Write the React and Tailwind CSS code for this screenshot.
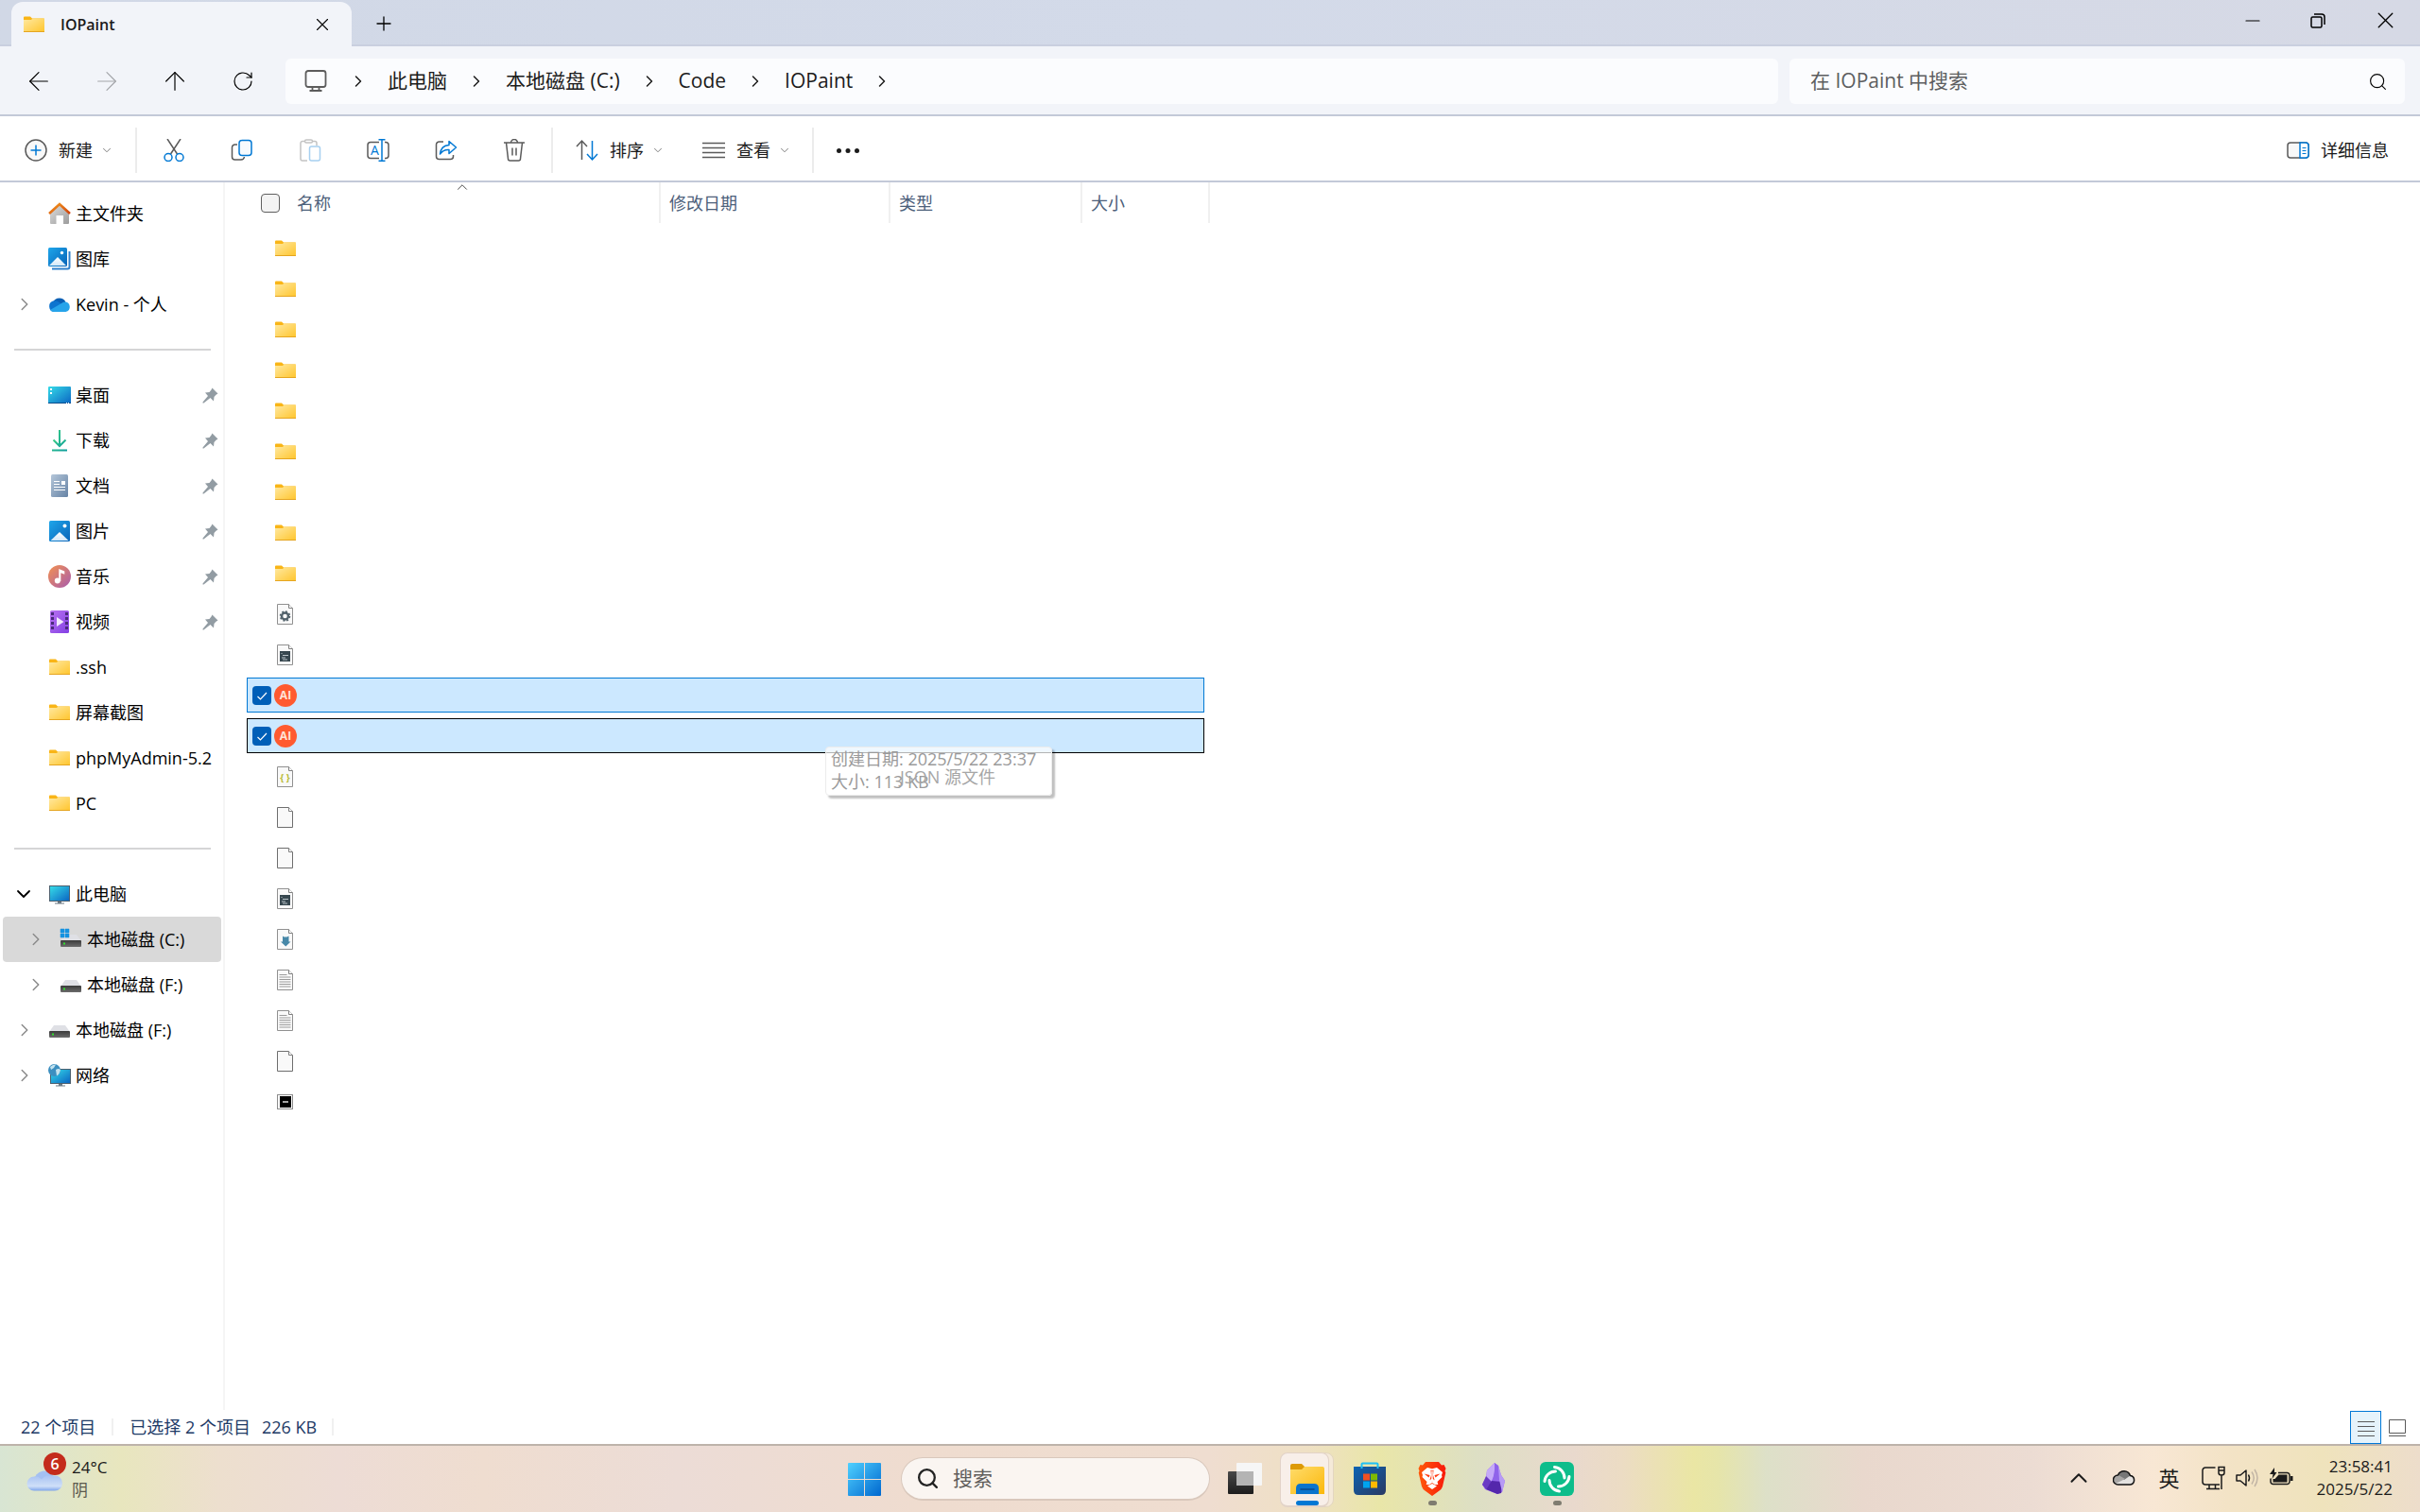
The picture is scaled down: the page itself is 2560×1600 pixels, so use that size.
import { useState } from "react";
import {
  ArrowLeft,
  ArrowRight,
  ArrowUp,
  ChevronDown,
  ChevronRight,
  ChevronUp,
  Minus,
  Plus,
  RotateCw,
  Search,
  X,
} from "lucide-react";

const Gradients = () => (
  <svg width="0" height="0" className="absolute" aria-hidden="true">
    <defs>
      <linearGradient id="folder" x1="0" y1="0" x2="1" y2="1">
        <stop offset="0" stopColor="#ffe9a2" />
        <stop offset="1" stopColor="#ffc52c" />
      </linearGradient>
      <linearGradient id="cyan" x1="0" y1="0" x2="1" y2="1">
        <stop offset="0" stopColor="#36dbe8" />
        <stop offset="1" stopColor="#0b66c3" />
      </linearGradient>
      <linearGradient id="blue" x1="0" y1="0" x2="1" y2="1">
        <stop offset="0" stopColor="#1fa6ea" />
        <stop offset="1" stopColor="#0763b8" />
      </linearGradient>
      <linearGradient id="winlogo" x1="0" y1="0" x2="1" y2="1">
        <stop offset="0" stopColor="#4fd0ff" />
        <stop offset="1" stopColor="#0067cf" />
      </linearGradient>
      <linearGradient id="snow" x1="0" y1="0" x2="0" y2="1">
        <stop offset="0" stopColor="#ffffff" />
        <stop offset="1" stopColor="#d3e8f8" />
      </linearGradient>
      <linearGradient id="green" x1="0" y1="0" x2="1" y2="1">
        <stop offset="0" stopColor="#3ccf86" />
        <stop offset="1" stopColor="#0c9c9c" />
      </linearGradient>
      <linearGradient id="doc" x1="0" y1="0" x2="1" y2="1">
        <stop offset="0" stopColor="#b4c6d9" />
        <stop offset="1" stopColor="#6683a5" />
      </linearGradient>
      <linearGradient id="music" x1="0" y1="0" x2="1" y2="1">
        <stop offset="0" stopColor="#f3914f" />
        <stop offset="1" stopColor="#a85cae" />
      </linearGradient>
      <linearGradient id="video" x1="0" y1="0" x2="1" y2="1">
        <stop offset="0" stopColor="#b872f0" />
        <stop offset="1" stopColor="#8340e4" />
      </linearGradient>
      <linearGradient id="roof" x1="0" y1="0" x2="1" y2="1">
        <stop offset="0" stopColor="#f49a1f" />
        <stop offset="1" stopColor="#d0400a" />
      </linearGradient>
      <linearGradient id="wall" x1="0" y1="0" x2="1" y2="1">
        <stop offset="0" stopColor="#dcdcdc" />
        <stop offset="1" stopColor="#9c9c9c" />
      </linearGradient>
      <linearGradient id="drive" x1="0" y1="0" x2="0" y2="1">
        <stop offset="0" stopColor="#3a3a3a" />
        <stop offset="1" stopColor="#6c6c6c" />
      </linearGradient>
      <linearGradient id="sky" x1="0" y1="0" x2="0" y2="1">
        <stop offset="0" stopColor="#a9c3f2" />
        <stop offset="0.7" stopColor="#cfdff8" />
        <stop offset="1" stopColor="#7fa5ea" />
      </linearGradient>
      <linearGradient id="yellow" x1="0" y1="0" x2="1" y2="1">
        <stop offset="0" stopColor="#ffdc6b" />
        <stop offset="1" stopColor="#fbb80c" />
      </linearGradient>
      <linearGradient id="store" x1="0" y1="0" x2="1" y2="1">
        <stop offset="0" stopColor="#0b63b3" />
        <stop offset="1" stopColor="#2b3a63" />
      </linearGradient>
      <linearGradient id="brave" x1="0" y1="0" x2="1" y2="0">
        <stop offset="0" stopColor="#ff5a0a" />
        <stop offset="1" stopColor="#f8190a" />
      </linearGradient>
      <linearGradient id="dark" x1="0" y1="0" x2="0" y2="1">
        <stop offset="0" stopColor="#484848" />
        <stop offset="1" stopColor="#1c1c1c" />
      </linearGradient>
    </defs>
  </svg>
);

const Icon = ({ size = 24, children }) => (
  <svg
    width={size}
    height={size}
    viewBox="0 0 24 24"
    fill="none"
    className="shrink-0"
    aria-hidden="true"
  >
    {children}
  </svg>
);

const FolderIcon = () => (
  <Icon>
    <path d="M1 4.500a1 1 0 0 1 1-1h6l2 2h12.500v2H1z" fill="#f9b517" />
    <path d="M1 7h8l1.500-1.500H23V20H1z" fill="url(#folder)" />
    <path d="M1 19.500h22" stroke="#e5a520" />
  </Icon>
);

const HomeIcon = () => (
  <Icon>
    <path d="M2 11 12 3l10 8v11q0 1-1 1h-5v-9H8.500v9H3q-1 0-1-1z" fill="url(#wall)" />
    <path d="m1 12 11-10 11 10" stroke="url(#roof)" strokeWidth="2.600" />
  </Icon>
);

const GalleryIcon = () => (
  <Icon>
    <path d="M22.500 4v16.500a2 2 0 0 1-2 2H4" stroke="#2f80cc" strokeWidth="2" />
    <rect width="20" height="20" rx="1.500" fill="url(#blue)" />
    <path d="M1 19 10 10l9 9z" fill="url(#snow)" />
    <circle cx="14.500" cy="5.500" r="1.700" fill="#fff" />
  </Icon>
);

const CloudIcon = () => (
  <Icon>
    <path d="M5 10a7.500 7.500 0 0 1 13.500-.5L11 15z" fill="#0a5fb4" />
    <path d="M6 20a6 6 0 0 1-1-11.500q3-1 6 1L20 16l-8 4z" fill="#0d74cf" />
    <path d="M17.500 9.500a5.300 5.300 0 0 1 1 10.500H6q-2.500 0-4-2l12-7q1.500-1.300 3.500-1.500z" fill="#27a4ea" />
  </Icon>
);

const DesktopIcon = () => (
  <Icon>
    <rect y="3" width="24" height="18" rx="1" fill="url(#cyan)" />
    <path d="M0 20.500h24" stroke="#0d4d8b" />
    <path d="M2 5h2v2H2zM2 9h2v2H2zM19 20h1v1h-1zM21 20h1v1h-1z" fill="#fff" />
  </Icon>
);

const DownloadIcon = () => (
  <Icon>
    <path d="M5.500 11.500 12 18l6.500-6.500" stroke="url(#green)" strokeWidth="2" />
    <path d="M11 1h2v17h-2zM4 21.500h16v2H4z" fill="url(#green)" />
  </Icon>
);

const DocumentIcon = () => (
  <Icon>
    <rect x="3" width="18" height="24" rx="1.500" fill="url(#doc)" />
    <path d="M6 7.500h6M6 10.500h6M6 13.500h12M6 16.500h12" stroke="#fff" />
    <path d="M14 7h4v4h-4z" fill="#fff" />
  </Icon>
);

const PictureIcon = () => (
  <Icon>
    <rect x="1" y="1" width="22" height="22" rx="1.500" fill="url(#blue)" />
    <path d="m2.500 22 9.500-9 9.500 9z" fill="url(#snow)" />
    <circle cx="17.500" cy="6.500" r="2" fill="#fff" />
  </Icon>
);

const MusicIcon = () => (
  <Icon>
    <circle cx="12" cy="12" r="12" fill="url(#music)" />
    <circle cx="9.800" cy="16.500" r="3" fill="#fff" />
    <path d="M11.300 17V4l6 2.500v3.300l-4-1.600V17z" fill="#fff" />
  </Icon>
);

const VideoIcon = () => (
  <Icon>
    <rect x="2" width="20" height="24" rx="1.500" fill="url(#video)" />
    <path d="M4.500 2v20M19.500 2v20" stroke="#4b2a7c" strokeWidth="3" strokeDasharray="3 2" />
    <path d="m9 7 7.500 5L9 17z" fill="#f3eafd" />
  </Icon>
);

const PcIcon = () => (
  <Icon>
    <rect x="1" y="3" width="22" height="17" fill="#4c5f6e" />
    <rect x="2" y="4" width="20" height="15" fill="url(#cyan)" />
    <path d="M10 20h4v1.500h3v1H7v-1h3z" fill="#6d7a84" />
  </Icon>
);

const NetworkIcon = () => (
  <Icon>
    <rect x="2" y="5" width="22" height="16" fill="#4c5f6e" />
    <rect x="3" y="6" width="20" height="14" fill="url(#cyan)" />
    <path d="M11 21h4v1.500h3v1H8v-1h3z" fill="#6d7a84" />
    <circle cx="6.500" cy="6.500" r="6.500" fill="#3c8fc0" />
    <path d="M2 3q3-3 6-2.500L6 4 3 6zM8 6q3-2 5 0-1 5-4 6.500z" fill="#c4e3ef" />
  </Icon>
);

const DriveIcon = ({ system }) => (
  <Icon>
    <path d="M6 7h12l5 7H1z" fill="#dfe0e5" />
    <rect x="1" y="13" width="22" height="7" rx="1" fill="url(#drive)" />
    <path d="M4 15.500h2v2H4z" fill="#2fe02c" />
    {system && (
      <path
        d="M1 1h4v4H1zM6 1h4v4H6zM1 6h4v4H1zM6 6h4v4H6z"
        fill="#1492e0"
        stroke="#1492e0"
        strokeWidth="0.500"
      />
    )}
  </Icon>
);

const PinIcon = () => (
  <svg width="17" height="17" viewBox="0 0 17 17" className="shrink-0" aria-hidden="true">
    <path
      d="m10.500.5 6 6-2 1.200-2 2.300-.5 4.500L8.500 11l-7 5.500H.5v-1L6 9 3 5.500 7.500 5l2-2.500z"
      fill="#929ca3"
    />
  </svg>
);

const FileIcon = ({ kind }) => (
  <Icon>
    <path
      d="M3.500 1.500h12l4 4v17h-16z"
      fill="#f9f9f9"
      stroke={kind === "blank" ? "#6e6e6e" : "#909090"}
    />
    <path d="M15.500 1.500v4h4" fill="#fff" stroke="#808080" />
    {kind === "gear" && (
      <>
        <circle cx="11.500" cy="14" r="3.500" stroke="#53636c" strokeWidth="2.400" />
        <circle cx="11.500" cy="14" r="5" stroke="#53636c" strokeWidth="1.600" strokeDasharray="1.960 1.960" />
      </>
    )}
    {kind === "script" && (
      <>
        <path d="M6 8h11v11H6z" fill="#37474f" />
        <path d="M7.500 10.500h1M9 12.500h6M8 15h4M9 17h5" stroke="#b9c3c8" />
      </>
    )}
    {kind === "json" && (
      <text x="11.500" y="17" textAnchor="middle" fontSize="10" fontWeight="700" fill="#b8bb35">
        {"{ }"}
      </text>
    )}
    {kind === "down" && (
      <path d="M9 8.500 10.500 9.500h3L15.500 8.500v6H17.500L12.300 19.500 7 14.500h2z" fill="#4788a8" />
    )}
    {kind === "text" && (
      <path
        d="M5.500 6.500h8M5.500 9h12M5.500 11.500h12M5.500 14h12M5.500 16.500h12M5.500 19h12"
        stroke="#9b9b9b"
      />
    )}
  </Icon>
);

const ChipIcon = () => (
  <Icon>
    <rect x="3.500" y="4.500" width="16" height="15" stroke="#8b8b8b" />
    <rect x="6" y="6" width="12" height="12" fill="#000" />
    <path d="M9 12h6" stroke="#ddd" strokeWidth="1.500" />
  </Icon>
);

const AiIcon = () => (
  <span className="flex size-6 items-center justify-center rounded-full bg-[#ff5a30] text-xs leading-none font-bold text-[#ffe4d8]">
    AI
  </span>
);

const quickLinks = [
  { name: "主文件夹", icon: <HomeIcon /> },
  { name: "图库", icon: <GalleryIcon /> },
  { name: "Kevin - 个人", icon: <CloudIcon />, arrow: true },
];

const pinned = [
  { name: "桌面", icon: <DesktopIcon />, pin: true },
  { name: "下载", icon: <DownloadIcon />, pin: true },
  { name: "文档", icon: <DocumentIcon />, pin: true },
  { name: "图片", icon: <PictureIcon />, pin: true },
  { name: "音乐", icon: <MusicIcon />, pin: true },
  { name: "视频", icon: <VideoIcon />, pin: true },
  { name: ".ssh", icon: <FolderIcon /> },
  { name: "屏幕截图", icon: <FolderIcon /> },
  { name: "phpMyAdmin-5.2", icon: <FolderIcon /> },
  { name: "PC", icon: <FolderIcon /> },
];

const devices = [
  { name: "此电脑", icon: <PcIcon />, open: true },
  { name: "本地磁盘 (C:)", icon: <DriveIcon system />, arrow: true, nested: true, active: true },
  { name: "本地磁盘 (F:)", icon: <DriveIcon />, arrow: true, nested: true },
  { name: "本地磁盘 (F:)", icon: <DriveIcon />, arrow: true },
  { name: "网络", icon: <NetworkIcon />, arrow: true },
];

const files = [
  ...Array(9).fill("folder"),
  "gear",
  "script",
  "ai",
  "ai",
  "json",
  "blank",
  "blank",
  "script",
  "down",
  "text",
  "text",
  "blank",
  "chip",
];

const crumbs = ["此电脑", "本地磁盘 (C:)", "Code", "IOPaint"];

const TitleBar = () => (
  <header className="flex h-[49px] items-stretch justify-between border-b-2 border-[#c9cfdf] bg-linear-to-r from-[#d1d8e6] via-[#d3dae9] to-[#d6d9e5]">
    <div className="flex">
      <div className="-mb-0.5 ml-3 mt-0.5 flex w-[360px] items-center rounded-t-xl bg-[#f2f4f9] pr-5 pl-3">
        <FolderIcon />
        <span className="ml-4 flex-1 text-base font-semibold text-[#1b1b1b]">IOPaint</span>
        <button aria-label="关闭标签页">
          <X size={22} strokeWidth={1.2} />
        </button>
      </div>
      <button aria-label="新建标签页" className="ml-5 px-0.5 pt-0.5">
        <Plus size={24} strokeWidth={1.3} />
      </button>
    </div>
    <div className="flex pb-1">
      <button aria-label="最小化" className="w-[70px] pl-6">
        <Minus size={24} strokeWidth={1.2} />
      </button>
      <button aria-label="还原" className="flex w-[70px] items-center justify-center">
        <svg width="16" height="16" viewBox="0 0 16 16" fill="none" stroke="#000" strokeWidth="1.500">
          <rect x="1" y="4" width="11" height="11" rx="1.500" />
          <path d="M4 1h8a3 3 0 0 1 3 3v8" />
        </svg>
      </button>
      <button aria-label="关闭" className="flex w-[73px] items-center justify-center">
        <X size={29} strokeWidth={1.1} />
      </button>
    </div>
  </header>
);

const AddressBar = () => {
  const [query, setQuery] = useState("");

  return (
    <div className="flex h-[74px] items-center border-b-2 border-[#c3c9d8] bg-[#f2f4f9] pt-0.5">
      <nav className="flex w-[302px] shrink-0 items-center pl-[5px]">
        <button aria-label="后退" className="flex w-[72px] justify-center">
          <ArrowLeft size={32} strokeWidth={0.9} />
        </button>
        <button aria-label="前进" disabled className="flex w-[72px] justify-center text-[#a3a5a9]">
          <ArrowRight size={32} strokeWidth={0.9} />
        </button>
        <button aria-label="向上" className="flex w-[72px] justify-center">
          <ArrowUp size={32} strokeWidth={0.9} />
        </button>
        <button aria-label="刷新" className="flex w-[72px] justify-center">
          <RotateCw size={24} strokeWidth={1.2} />
        </button>
      </nav>
      <div className="flex h-12 flex-1 items-center rounded-md bg-[#fbfcfe] pl-5 text-[21px] text-[#1b1b1b]">
        <svg
          width="24"
          height="24"
          viewBox="0 0 24 24"
          fill="none"
          stroke="#5c5c5c"
          strokeWidth="1.800"
          className="mr-0.5"
        >
          <rect x="1.500" y="1" width="21" height="17" rx="2.500" />
          <path d="M8.500 18v3.500M15.500 18v3.500M5.500 22h13" />
        </svg>
        {crumbs.map((crumb) => (
          <div key={crumb} className="flex items-center">
            <ChevronRight size={20} strokeWidth={1.8} className="mx-[21px]" />
            <a href="#">{crumb}</a>
          </div>
        ))}
        <ChevronRight size={20} strokeWidth={1.8} className="mx-[21px]" />
      </div>
      <label className="mr-4 ml-3 flex h-12 w-[651px] items-center rounded-md bg-[#fbfcfe] pr-[18px] pl-[22px]">
        <input
          value={query}
          onChange={(e) => setQuery(e.target.value)}
          aria-label="搜索"
          placeholder="在 IOPaint 中搜索"
          className="min-w-0 flex-1 bg-transparent text-[21px] outline-none placeholder:text-[#5d5e60]"
        />
        <Search size={21} strokeWidth={1.3} />
      </label>
    </div>
  );
};

const Divider = () => <div className="h-12 w-0.5 bg-[#ececec]" />;

const ToolIcon = ({ label, disabled, children }) => (
  <button aria-label={label} disabled={disabled} className="flex w-[72px] justify-center">
    <svg width="24" height="24" viewBox="0 0 24 24" fill="none" stroke="#5a5a5a" strokeWidth="1.500">
      {children}
    </svg>
  </button>
);

const Caret = () => <ChevronDown size={14} strokeWidth={1.5} className="ml-2 text-[#6b6b6b]" />;

const Toolbar = () => (
  <div className="flex h-[70px] items-center border-b-2 border-[#c3c9d8] bg-white pt-[3px] text-lg text-[#1b1b1b]">
    <button className="flex w-[143px] items-center pl-[26px]">
      <Icon>
        <circle cx="12" cy="12" r="11" fill="#f8f8f8" stroke="#5a5a5a" strokeWidth="1.500" />
        <path d="M12 6.500v11M6.500 12h11" stroke="#0078d4" strokeWidth="1.500" />
      </Icon>
      <span className="ml-3">新建</span>
      <Caret />
    </button>
    <Divider />
    <div className="flex px-[3px]">
      <ToolIcon label="剪切">
        <path d="M5 0 15.500 16M19 0 8.500 16" />
        <circle cx="6" cy="19.500" r="4" stroke="#0078d4" />
        <circle cx="18" cy="19.500" r="4" stroke="#0078d4" />
      </ToolIcon>
      <ToolIcon label="复制">
        <path d="M7 6H4.500A3 3 0 0 0 1.500 9v10a3 3 0 0 0 3 3H11q3 0 3.500-3" />
        <rect x="9" y="1.500" width="13" height="16" rx="3" stroke="#0078d4" fill="#f7fafd" />
      </ToolIcon>
      <ToolIcon label="粘贴" disabled>
        <path d="M6.500 2.500H4a2 2 0 0 0-2 2V21a2 2 0 0 0 2 2h5M14.500 2.500H17a2 2 0 0 1 2 2V7" stroke="#c4c4c4" />
        <rect x="6.500" y="1" width="8" height="3" rx="1.500" stroke="#c4c4c4" />
        <rect x="11.500" y="8" width="11" height="15" rx="2" stroke="#a7d0f0" />
      </ToolIcon>
      <ToolIcon label="重命名">
        <path d="M13 3.500H4a3 3 0 0 0-3 3v11a3 3 0 0 0 3 3h9M19 3.500h1a3 3 0 0 1 3 3v11a3 3 0 0 1-3 3h-1" />
        <path d="M16 .8v22.400M12.500.8h7M12.500 23.200h7" stroke="#0078d4" />
        <text x="8.500" y="17" textAnchor="middle" fontSize="14" fill="#0078d4" stroke="none">
          A
        </text>
      </ToolIcon>
      <ToolIcon label="共享">
        <path d="M9 3H4.500a3 3 0 0 0-3 3v12.500a3 3 0 0 0 3 3h12a3 3 0 0 0 3-3V17" />
        <path d="M15 2.500 22.500 9 15 15.500v-4q-6-.5-9.500 4.500 1-9 9.500-9.500z" stroke="#0078d4" strokeLinejoin="round" />
      </ToolIcon>
      <ToolIcon label="删除">
        <path d="M1 4h22M3.500 4 5.500 21a2 2 0 0 0 2 2h9a2 2 0 0 0 2-2l2-17M8.500 4a3.500 3.500 0 0 1 7 0M10 9.500v8M14 9.500v8" />
      </ToolIcon>
    </div>
    <Divider />
    <button className="flex w-[137px] items-center pl-6">
      <Icon>
        <path d="M6.500 22V2M1 8l5.500-6L12 8" stroke="#5a5a5a" strokeWidth="1.500" />
        <path d="M17.500 2v20M12 16l5.500 6 5.500-6" stroke="#0078d4" strokeWidth="1.500" />
      </Icon>
      <span className="ml-3">排序</span>
      <Caret />
    </button>
    <button className="flex w-[137px] items-center pl-[21px]">
      <Icon>
        <path d="M0 4.500h24M0 9.500h24M0 14.500h24M0 19.500h24" stroke="#5a5a5a" strokeWidth="1.500" />
      </Icon>
      <span className="ml-3">查看</span>
      <Caret />
    </button>
    <Divider />
    <button aria-label="更多" className="flex w-[72px] justify-center">
      <Icon>
        <circle cx="2.500" cy="12.500" r="2.500" fill="#1b1b1b" />
        <circle cx="12" cy="12.500" r="2.500" fill="#1b1b1b" />
        <circle cx="21.500" cy="12.500" r="2.500" fill="#1b1b1b" />
      </Icon>
    </button>
    <button className="ml-auto flex items-center gap-3 pr-[33px]">
      <Icon>
        <rect x="1" y="4" width="22" height="16" rx="3" fill="#f8f8f8" stroke="#5a5a5a" strokeWidth="1.500" />
        <path d="M14 4h6a3 3 0 0 1 3 3v10a3 3 0 0 1-3 3h-6z" stroke="#0078d4" strokeWidth="1.500" fill="#fff" />
        <path d="M16.500 9.500h4M16.500 12.500h4M16.500 15.500h4" stroke="#0078d4" />
      </Icon>
      详细信息
    </button>
  </div>
);

const SideItem = ({ item }) => (
  <li className="pr-0.5 pl-[3px]">
    <a
      href="#"
      className={`flex h-12 items-center rounded-sm ${item.nested ? "pl-[30px]" : "pl-[18px]"} ${
        item.active ? "bg-[#d9d9d9]" : ""
      }`}
    >
      <span className="flex w-[30px] shrink-0">
        {item.arrow && <ChevronRight size={22} strokeWidth={1.6} className="-ml-1.5 text-[#8a8a8a]" />}
        {item.open && <ChevronDown size={24} strokeWidth={1.8} className="-ml-2" />}
      </span>
      {item.icon}
      <span className="ml-[5px] flex-1 overflow-hidden whitespace-nowrap">{item.name}</span>
      {item.pin && (
        <span className="mr-[3px]">
          <PinIcon />
        </span>
      )}
    </a>
  </li>
);

const SideGap = () => (
  <li className="flex h-12 items-center pr-[13px] pl-[15px]">
    <hr className="w-full border-t-2 border-[#d5d5d6]" />
  </li>
);

const Sidebar = () => (
  <aside className="w-[238px] shrink-0 border-r-2 border-[#f5f5f5] pt-[9px] text-lg text-black">
    <ul>
      {quickLinks.map((item) => (
        <SideItem key={item.name} item={item} />
      ))}
      <SideGap />
      {pinned.map((item) => (
        <SideItem key={item.name} item={item} />
      ))}
      <SideGap />
      {devices.map((item, i) => (
        <SideItem key={i} item={item} />
      ))}
    </ul>
  </aside>
);

const fileIcon = (kind) => {
  if (kind === "folder") return <FolderIcon />;
  if (kind === "ai") return <AiIcon />;
  if (kind === "chip") return <ChipIcon />;
  return <FileIcon kind={kind} />;
};

const HeadCell = ({ children }) => (
  <div className="flex h-[43px] items-center border-r-2 border-[#f0f0f0] pl-[9px]">{children}</div>
);

const FileTable = () => {
  const [selected, setSelected] = useState([11, 12]);

  const toggle = (i) =>
    setSelected(selected.includes(i) ? selected.filter((n) => n !== i) : [...selected, i]);

  return (
    <div className="relative ml-[23px] flex-1">
      <table className="-mt-1.5 w-[1013px] table-fixed border-separate border-spacing-x-0 border-spacing-y-1.5 text-left text-lg">
        <thead className="align-top text-[#4c607a]">
          <tr className="h-[45px]">
            <th className="relative w-[438px] p-0 font-normal">
              <HeadCell>
                <input
                  type="checkbox"
                  aria-label="全选"
                  className="ml-1.5 size-5 appearance-none rounded-sm border border-[#5f5f5f] bg-[#f3f3f3]"
                />
                <span className="ml-[18px]">名称</span>
              </HeadCell>
              <ChevronUp size={18} strokeWidth={1.3} className="absolute -top-1 left-1/2 text-[#444]" />
            </th>
            <th className="w-[243px] p-0 font-normal">
              <HeadCell>修改日期</HeadCell>
            </th>
            <th className="w-[203px] p-0 font-normal">
              <HeadCell>类型</HeadCell>
            </th>
            <th className="p-0 font-normal">
              <div className="-mr-1.5">
                <HeadCell>大小</HeadCell>
              </div>
            </th>
          </tr>
        </thead>
        <tbody>
          {files.map((kind, i) => {
            const isSelected = selected.includes(i);
            return (
              <tr
                key={i}
                className={`h-[37px] ${
                  isSelected
                    ? i === 12
                      ? "bg-[#cce8ff] outline -outline-offset-1 outline-black"
                      : "bg-[#cce8ff] outline -outline-offset-1 outline-[#0078d4]"
                    : ""
                }`}
              >
                <td className="p-0">
                  <div className="flex h-[37px] items-center pl-1.5">
                    <label className="relative mr-[3px] flex size-5">
                      <input
                        type="checkbox"
                        aria-label={`项目 ${i + 1}`}
                        checked={isSelected}
                        onChange={() => toggle(i)}
                        className="size-5 appearance-none rounded-sm checked:bg-[#005fb8]"
                      />
                      {isSelected && (
                        <svg
                          width="20"
                          height="20"
                          viewBox="0 0 20 20"
                          fill="none"
                          stroke="#fff"
                          strokeWidth="1.200"
                          className="pointer-events-none absolute inset-0"
                        >
                          <path d="m5.500 11 3 3 6.500-7" />
                        </svg>
                      )}
                    </label>
                    {fileIcon(kind)}
                  </div>
                </td>
                <td className="p-0" />
                <td className="p-0 pl-2.5 leading-6 text-[#a6a6a6]">
                  {kind === "json" && <span className="relative z-10">JSON 源文件</span>}
                </td>
                <td className="p-0" />
              </tr>
            );
          })}
        </tbody>
      </table>
      <div
        role="tooltip"
        className="absolute top-[597px] left-[612px] w-60 rounded-sm border border-[#ececec] bg-white/70 pb-0.5 pl-[5px] text-lg leading-6 whitespace-nowrap text-[#9a9a9a] shadow-[3px_3px_2px_rgba(0,0,0,0.25)]"
      >
        <p>创建日期: 2025/5/22 23:37</p>
        <p>大小: 113 KB</p>
      </div>
    </div>
  );
};

const StatusBar = () => (
  <footer className="flex h-9 items-center bg-white pl-[22px] text-lg text-[#1d3a66]">
    <span>22 个项目</span>
    <div className="mx-[17px] h-[18px] w-0.5 bg-[#f0f0f0]" />
    <span>已选择 2 个项目</span>
    <span className="ml-3">226 KB</span>
    <div className="ml-4 h-[18px] w-0.5 bg-[#f0f0f0]" />
    <div className="ml-auto flex h-full pt-px pr-[7px]">
      <button
        aria-label="详细信息视图"
        className="flex h-full w-[33px] items-center justify-center border border-[#0078d7] bg-[#e5f3fb] pt-0.5"
      >
        <svg width="18" height="18" viewBox="0 0 18 18" stroke="#5a5a5a">
          <path d="M0 1.500h18M0 6.500h18M0 11.500h18M0 16.500h18" />
        </svg>
      </button>
      <button aria-label="大图标视图" className="flex w-[34px] items-center justify-center">
        <svg width="18" height="18" viewBox="0 0 18 18" fill="none" stroke="#5a5a5a">
          <path d="M.5.500h17v14H.5zM0 17.500h18" />
        </svg>
      </button>
    </div>
  </footer>
);

const TaskButton = ({ label, children, dot }) => (
  <button aria-label={label} className="relative flex h-full w-[66px] items-center justify-center">
    {children}
    {dot && <span className="absolute bottom-[7px] h-[5px] w-[9px] rounded-full bg-[#7f7c70]" />}
  </button>
);

const Taskbar = () => (
  <div className="flex h-[72px] shrink-0 items-stretch border-t-2 border-[#bdb3aa] bg-[linear-gradient(90deg,#d8e5d3_0%,#e8e6be_5%,#eddfce_9%,#eddcd5_14%,#efddd0_20%,#ecdcd6_28%,#efdccf_38%,#efddd0_50%,#efe0c4_54%,#e9e6a8_57%,#dddfc4_61%,#e9d9cd_65%,#ecdcc4_67%,#eae6a4_70%,#e6e5aa_71%,#dde0c8_73%,#e9d8cd_77%,#ecdcd3_84%,#f8e7d4_89%,#f3e3c6_92%,#efe3bc_96%,#edddcb_100%)]">
    <div className="flex flex-1 items-center pl-7">
      <button className="flex items-start text-left text-[#1b1b1b]">
        <span className="relative mt-1 mr-3 w-9">
          <svg width="38" height="34" viewBox="0 0 38 34" fill="none" aria-hidden="true">
            <path d="M8 22a11 11 0 0 1 21-4l-8 10z" fill="#a4c0f1" />
            <path d="M8 32.500a7.500 7.500 0 0 1 0-15q4-1 8 3 3-4 8-4h6a8 8 0 0 1 0 16z" fill="url(#sky)" />
          </svg>
          <span className="absolute -top-2 left-[18px] flex size-6 items-center justify-center rounded-full bg-[#c42b1c] text-base leading-none font-semibold text-white">
            6
          </span>
        </span>
        <span className="text-[17px] leading-6">
          24°C
          <br />
          <span className="text-[#5b5a4e]">阴</span>
        </span>
      </button>
    </div>

    <div className="ml-0.5 flex items-center">
      <TaskButton label="开始">
        <svg width="35" height="35" viewBox="0 0 35 35">
          <path
            d="M1 0h16v17H0V1q0-1 1-1zM18 0h16q1 0 1 1v16H18zM0 18h17v17H1q-1 0-1-1zM18 18h17v16q0 1-1 1H18z"
            fill="url(#winlogo)"
          />
        </svg>
      </TaskButton>
      <label className="mr-1 ml-1.5 flex h-[46px] w-[327px] items-center rounded-full border border-b-2 border-[#d9c8bc] bg-[#faf5f1] pl-[15px]">
        <Search size={25} strokeWidth={2.2} className="text-[#222]" />
        <input
          aria-label="任务栏搜索"
          placeholder="搜索"
          className="ml-3.5 min-w-0 flex-1 bg-transparent text-[21px] outline-none placeholder:text-[#605d5b]"
        />
      </label>
      <TaskButton label="任务视图">
        <svg width="36" height="36" viewBox="0 0 36 36">
          <rect y="10" width="27" height="24" rx="1" fill="url(#dark)" />
          <rect x="9" y="1" width="27" height="24" rx="1" fill="#f6f6f6" />
          <path d="M9 10h18v15H9z" fill="#b4b4b4" />
        </svg>
      </TaskButton>
      <TaskButton label="文件资源管理器">
        <span className="absolute top-[7px] right-[5px] h-[58px] w-10 rounded-lg border border-[#e3d6c0] bg-[#f5ead9]" />
        <span className="absolute top-[7px] left-1 h-[58px] w-[52px] rounded-lg border border-b-2 border-[#e2d3c8] bg-[#f8efe9]" />
        <svg width="36" height="36" viewBox="0 0 36 36" className="relative">
          <path d="M0 4q0-2 2-2h10l3 3v5H0z" fill="#dd9a06" />
          <path d="M0 8h12l3-3h19q2 0 2 2v27H0z" fill="url(#yellow)" />
          <path d="M6 34v-6q0-5 5-5h14q5 0 5 5v6z" fill="#0b74cc" />
          <path d="M11 29h14" stroke="#0a4a8c" strokeWidth="1.500" strokeLinecap="round" />
        </svg>
        <span className="absolute bottom-[7px] h-[5px] w-6 rounded-full bg-[#0078d4]" />
      </TaskButton>
      <TaskButton label="Microsoft Store">
        <svg width="36" height="36" viewBox="0 0 36 36" fill="none">
          <path d="M9.500 7V2.500q0-1 1-1h15q1 0 1 1V7" stroke="#1fc0f4" strokeWidth="2" />
          <path d="M1 5h34v25q0 5-5 5H6q-5 0-5-5z" fill="url(#store)" />
          <path d="M9.500 7V5M26.500 7V5" stroke="#1fc0f4" strokeWidth="2" />
          <path d="M11 12.500h7v7h-7z" fill="#f25022" />
          <path d="M19 12.500h7v7h-7z" fill="#7fba00" />
          <path d="M11 20.500h7v7h-7z" fill="#00a4ef" />
          <path d="M19 20.500h7v7h-7z" fill="#ffb900" />
        </svg>
      </TaskButton>
      <TaskButton label="Brave" dot>
        <svg width="30" height="36" viewBox="0 0 30 36">
          <path
            d="M8 0h14l3 3.500 2.500-.5 2 4-1 2.500.8 2L26 26q-1 3-3.500 4.500L15 36l-7.500-5.500Q5 29 4 26L.7 11.500l.8-2L.5 7l2-4L5 3.500z"
            fill="url(#brave)"
          />
          <path
            d="m10 6 5 1.200L20 6l6 5-1 3 .5 2-5 5 .8 3L18 24l-3-2-3 2-3.300 0 .8-3-5-5 .5-2-1-3z"
            fill="#fff"
          />
          <path d="m10 25.500 5-2.500 5 2.500-5 3.500z" fill="#fff" />
          <path
            d="M6.500 12.500 12.500 14l-1 2.500zM23.500 12.500 17.500 14l1 2.500zM13.500 8.500 14 14l-1.500 5 2.500 1.500 2.500-1.500L16 14l.5-5.500L15 9z"
            fill="#ff3a10"
          />
          <path d="m14.300 9.500h1.400v8l1.500 2-2.200 1.200-2.200-1.200 1.500-2z" fill="#fff" />
        </svg>
      </TaskButton>
      <TaskButton label="Obsidian">
        <svg width="26" height="34" viewBox="0 0 26 34">
          <path d="M13 0 17 3l3 10 4 6-3 12-5 2L3 28 0 23l4-8 1-7z" fill="#9b6cf0" />
          <path d="M13 0 5 8l-1 9 6 3q4-8 3-20z" fill="#c5a9f8" />
          <path d="m13 0 4 3 2 15-9 1q4-8 3-19z" fill="#8f63ea" />
          <path d="m4 14 6 6-6 8-4-5z" fill="#6b3ac4" />
          <path d="m10 19 12 1-2 12-4 1-12-5z" fill="#5427ac" />
          <path d="m17 3 3 10 4 6-3 12-3-13z" fill="#b79af5" />
        </svg>
      </TaskButton>
      <TaskButton label="Element" dot>
        <svg width="36" height="36" viewBox="0 0 36 36" fill="none">
          <rect width="36" height="36" rx="6" fill="#0dbd8b" />
          <g stroke="#fff" strokeWidth="3" strokeLinecap="round">
            <path d="M15.500 5.500A11.500 11.500 0 0 1 26 17" />
            <path d="M31 15.500A11.500 11.500 0 0 1 19.500 26" />
            <path d="M20.500 31A11.500 11.500 0 0 1 10 19.500" />
            <path d="M5 20.500A11.500 11.500 0 0 1 16.500 10" />
          </g>
        </svg>
      </TaskButton>
    </div>

    <div className="flex flex-1 items-center justify-end pr-[29px] pb-0.5 text-[#1b1b1b]">
      <button aria-label="显示隐藏的图标" className="mr-[21px]">
        <ChevronUp size={30} strokeWidth={1.6} />
      </button>
      <button aria-label="OneDrive" className="mr-6">
        <svg width="24" height="24" viewBox="0 0 24 24">
          <path d="M5.500 19a5 5 0 0 1 0-10 7 7 0 0 1 13 .5 4.800 4.800 0 0 1 0 9.500z" fill="#e4e2e0" />
          <path d="M5.500 9a7 7 0 0 1 13 .5L12 14z" fill="#777" />
          <path d="m6 9 7 4-10 5q-5-6 3-9z" fill="#a8a6a4" />
          <path
            d="M5.500 19a5 5 0 0 1 0-10 7 7 0 0 1 13 .5 4.800 4.800 0 0 1 0 9.500z"
            fill="none"
            stroke="#111"
            strokeWidth="1.500"
          />
        </svg>
      </button>
      <button className="mr-6 text-[22px] leading-none">英</button>
      <button aria-label="网络、音量和电池" className="mr-6 flex items-center gap-[11px]">
        <svg width="25" height="26" viewBox="0 0 25 26" fill="none" stroke="#1b1b1b" strokeWidth="1.500">
          <path d="M14.500 2H4a3 3 0 0 0-3 3v12a3 3 0 0 0 3 3h15M8 20v4M14.500 20v4M5 24.500h14" />
          <path d="M18 1.500h6v6q0 2.500-3 2.500t-3-2.500zM18 5h6M21 10v15" />
        </svg>
        <svg width="25" height="24" viewBox="0 0 25 24" fill="none" stroke="#1b1b1b" strokeWidth="1.500">
          <path d="M1 9v6h4l6 5V4L5 9zM13.500 8.500q2 3.500 0 7" strokeLinejoin="round" />
          <path d="M17 5.500q4.500 6.500 0 13M20 3q6 9 0 18" stroke="#c2b5a5" />
        </svg>
        <svg width="25" height="24" viewBox="0 0 25 24" fill="none">
          <path
            d="M9 6.500h9.500a2.500 2.500 0 0 1 2.500 2.500v7a2.500 2.500 0 0 1-2.500 2.500h-15A2.500 2.500 0 0 1 1 16v-3.500"
            stroke="#1b1b1b"
            strokeWidth="1.500"
          />
          <path d="M9.500 8.500h9v8h-15V13h2zM22 10h2.500v5H22zM5 1 0 8h3.500L2.500 13l5-7H5z" fill="#1b1b1b" />
        </svg>
      </button>
      <button className="text-right text-[17px] leading-6">
        23:58:41
        <br />
        2025/5/22
      </button>
    </div>
  </div>
);

const App = () => (
  <div className="flex min-h-screen flex-col bg-white font-['Open_Sans','Noto_Sans_CJK_SC',sans-serif]">
    <Gradients />
    <TitleBar />
    <AddressBar />
    <Toolbar />
    <main className="flex flex-1">
      <Sidebar />
      <FileTable />
    </main>
    <StatusBar />
    <Taskbar />
  </div>
);

export default App;
